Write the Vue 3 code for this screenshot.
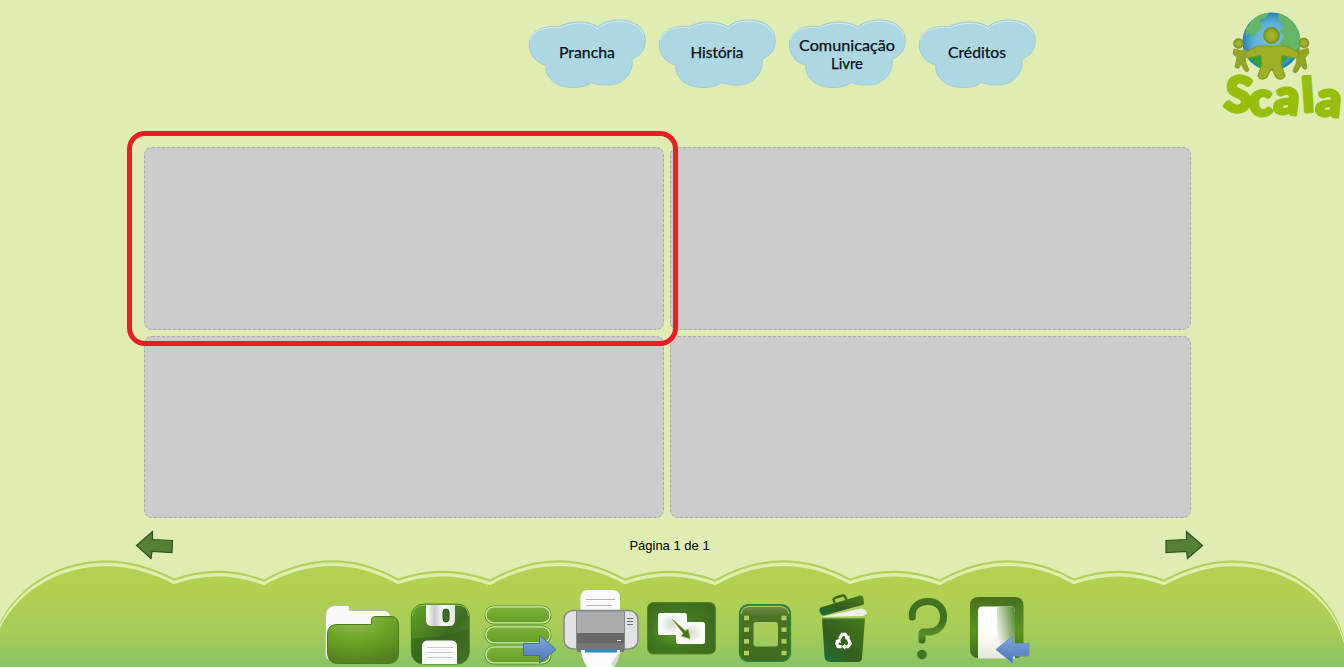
<script setup>
const menu = [
  { lines: [{ text: 'Prancha', y: 43, width: 56 }] },
  { lines: [{ text: 'História', y: 43, width: 53 }] },
  { lines: [{ text: 'Comunicação', y: 36, width: 96 }, { text: 'Livre', y: 54, width: 32 }] },
  { lines: [{ text: 'Créditos', y: 43, width: 58 }] },
]
const hills = 'M0 62 C20 22 62 0 107 0 C132 0 155 8 174 18 Q219 2 264 19 Q332 -19 398 18 Q444 2 490 19 Q557 -19 625 18 Q670 2 715 19 Q782 -19 850 18 Q895 2 940 19 Q1008 -19 1074 18 Q1119 2 1164 19 C1187 7 1209 0 1233 0 C1288 0 1334 34 1344 78 V120 H0Z'
</script>

<template>
  <main class="page">
    <header class="top">
      <nav class="menu">
        <svg v-for="(item, i) in menu" :key="i" width="130" height="80" viewBox="0 0 130 80">
          <path class="cloud" d="M34.500 11.800 C42 6.500 62 4 73 12 C78 7 86 5 94 5 C110 5 120.300 13 120.300 26 C120.300 35 115 41 107 44 C109 58 98 70 83 70 C77 70 71 69.500 66.500 67.500 C61 71.500 55 72.500 48 72.500 C31 72.500 20 63 20.700 50 C11 48 4.300 39 4.300 30 C4.300 17 17 9.500 34.500 11.800Z" />
          <path class="shine" d="M5.500 25 C8 15 20 11 35 13 C43 8 62 5.500 73 13.500 C79 8 86 6.200 94 6.200 C106 6.200 116 12 118.500 20" />
          <text v-for="line in item.lines" :key="line.text" x="62" :y="line.y" :textLength="line.width" lengthAdjust="spacingAndGlyphs">{{ line.text }}</text>
        </svg>
      </nav>
      <svg class="logo" width="134" height="122" viewBox="1210 3 134 122">
        <defs>
          <radialGradient id="sea"><stop offset="0" stop-color="#78c5e4" /><stop offset=".65" stop-color="#5eaed5" /><stop offset="1" stop-color="#2484b0" /></radialGradient>
          <radialGradient id="head"><stop offset="0" stop-color="#a9b92c" /><stop offset=".6" stop-color="#98aa24" /><stop offset="1" stop-color="#768b1f" /></radialGradient>
          <clipPath id="globe"><circle cx="1271.500" cy="41.500" r="29" /></clipPath>
        </defs>
        <circle cx="1271.500" cy="41.500" r="29" fill="url(#sea)" />
        <g clip-path="url(#globe)">
          <path d="M1246 29 L1255 16 L1270 12 L1265 18 L1259 21 L1263 26 L1258 31 L1254 37 L1249 33 L1246 37Z" fill="#65b767" />
          <path d="M1279 11 L1304 23 L1304 49 L1286 52 L1279 44 L1284 37 L1280 31 L1284 26 L1278 19Z" fill="#65b767" />
          <path d="M1245 50 L1257 51 L1265 61 L1262 70 L1248 60Z M1279 52 L1292 52 L1283 63Z" fill="#32a231" />
          <path d="M1242 34 Q1245 57 1265 71 H1240Z M1300 47 Q1292 59 1280 70 L1301 62Z" fill="#1686b7" opacity=".65" />
        </g>
        <g fill="url(#head)" stroke="#7c9020" stroke-width=".5">
          <circle cx="1238.500" cy="43.500" r="5" /><circle cx="1304" cy="43" r="5" /><circle cx="1271.500" cy="35.500" r="8.200" />
        </g>
        <path d="M1234 49 Q1240 51 1246 50 L1249 53 L1245 57 L1246 63 L1249 70 Q1248 73 1245 71 L1241 64 L1240 66 Q1239 70 1235 67 L1237 57 L1233 54Z M1308 48 Q1303 51 1296 50 L1293 54 L1297 57 L1296 64 L1293 70 Q1293 74 1297 72 L1301 65 L1303 68 Q1306 71 1307 68 L1305 58 L1309 53Z" fill="#93a522" stroke="#869a20" stroke-width=".8" />
        <path d="M1258 46 H1285 L1298 52 Q1300 58 1294 58 L1282 55 L1281 64 L1285 76 Q1281 82 1276 77 L1271.500 68 L1267 77 Q1261 82 1258 76 L1262 64 L1261 55 L1249 58 Q1243 57 1246 52Z" fill="#9fb027" stroke="#859a20" stroke-width="1.200" />
        <text class="brand"><tspan x="1223" y="110" rotate="7" font-size="49">S</tspan><tspan x="1250" y="116" rotate="-3" font-size="47">c</tspan><tspan x="1273" y="112.500" rotate="6" font-size="49">a</tspan><tspan x="1303" y="112" rotate="-4" font-size="47">l</tspan><tspan x="1315" y="114.500" rotate="6" font-size="49">a</tspan></text>
      </svg>
    </header>

    <section class="board">
      <div class="panel"><i class="selection"></i></div>
      <div class="panel"></div>
      <div class="panel"></div>
      <div class="panel"></div>
    </section>

    <div class="pager">
      <svg width="40" height="30" viewBox="0 0 40 30"><path d="M1.500 15.500 L17.500 1.500 V9.500 L37.500 10.500 L37 22.500 L17 21.500 L16 28.500Z" /></svg>
      <span>Página 1 de 1</span>
      <svg width="40" height="30" viewBox="0 0 40 30"><path d="M38.500 15.500 L22.500 1.500 V9.500 L2 10.500 V22.500 L22.500 21.500 L23.500 28.500Z" /></svg>
    </div>

    <footer class="footer">
      <svg class="hills" width="1344" height="107" viewBox="0 0 1344 107">
        <defs><linearGradient id="grass" x1="0" y1="-6" x2="0" y2="101" gradientUnits="userSpaceOnUse"><stop offset="0" stop-color="#b2d250" /><stop offset=".35" stop-color="#b0d051" /><stop offset=".7" stop-color="#a5cb58" /><stop offset="1" stop-color="#87c365" /></linearGradient></defs>
        <path :d="hills" transform="translate(0 .5)" fill="#b1d158" />
        <path :d="hills" transform="translate(0 2.800)" fill="#dfedaf" />
        <path :d="hills" transform="translate(0 6.200)" fill="url(#grass)" />
      </svg>
      <div class="tools">
        <svg width="85" height="80" viewBox="320 587 85 80">
          <defs>
            <radialGradient id="folder" cx=".38" cy="0" r="1"><stop offset="0" stop-color="#9dba62" /><stop offset=".5" stop-color="#6da626" /><stop offset="1" stop-color="#557f20" /></radialGradient>
            <linearGradient id="deep" x1="0" y1="0" x2="1" y2="1"><stop offset="0" stop-color="#66a525" /><stop offset=".55" stop-color="#3d6e20" /><stop offset="1" stop-color="#548927" /></linearGradient>
            <linearGradient id="metal"><stop offset="0" stop-color="#fff" /><stop offset=".3" stop-color="#c9ccc9" /><stop offset=".6" stop-color="#fff" /><stop offset="1" stop-color="#e2e4e2" /></linearGradient>
            <linearGradient id="blue" x1="0" y1="0" x2="0" y2="1"><stop offset="0" stop-color="#84a9dc" /><stop offset="1" stop-color="#4775b8" /></linearGradient>
          </defs>
          <path d="M325.500 655 V616 Q325.500 605.500 336 605.500 H349.500 V610.500 H384 Q391 611 391 620 V650 L331 660 Q326 660 325.500 655Z" fill="#f8f8f8" stroke="#b9bfae" />
          <path d="M327.500 634 Q327.500 624.500 337 624.500 H371.500 V620 Q371.500 616.500 376 616.500 H391 Q398.500 616.500 398.500 625 V653 Q398.500 663.500 388 663.500 H338 Q327.500 663.500 327.500 652Z" fill="url(#folder)" stroke="#477e1c" />
        </svg>
        <svg width="72" height="80" viewBox="405 587 72 80">
          <rect x="411.300" y="604" width="58" height="60" rx="12" fill="url(#deep)" stroke="#3f7a23" stroke-width=".8" />
          <path d="M412.500 616 Q412.500 605.200 424 605.200 H458 Q468 605.500 468.500 616" fill="none" stroke="#92bd57" />
          <path d="M412 638 Q440 639 469 629 V651 Q469 663 458 663 H423 Q412 663 412 651Z" fill="#315c20" opacity=".45" />
          <path d="M426 605 H455 V620 Q455 626 449 626 H432 Q426 626 426 620Z" fill="url(#metal)" /><rect x="443" y="609" width="6" height="13" rx="3" fill="#397122" stroke="#294f1d" />
          <path d="M422 664 V645 Q423 640.500 428 640.500 H452 Q457 641 457 646 V664Z" fill="#fafafa" /><path d="M427 647.500 H453 M427 652.500 H453 M427 657.500 H453" stroke="#c9ccc9" />
        </svg>
        <svg width="83" height="80" viewBox="477 587 83 80">
          <defs><linearGradient id="row" x1="0" y1="0" x2="0" y2="1"><stop offset="0" stop-color="#7fb03a" /><stop offset="1" stop-color="#64a023" /></linearGradient></defs>
          <g v-for="n in 3" :key="n" :transform="`translate(0 ${(n - 1) * 20})`"><rect x="484.500" y="605.500" width="67" height="19" rx="9.300" fill="#4d982d" /><rect x="485.900" y="606.900" width="64.200" height="16" rx="8" fill="url(#row)" stroke="#d7edb0" stroke-width="1.300" /></g>
          <path d="M523.500 643.500 H539.500 V635.500 L556 649.500 L539.500 663 V655.500 H523.500Z" fill="url(#blue)" stroke="#466fa8" />
        </svg>
        <svg width="83" height="80" viewBox="560 587 83 80">
          <rect x="580.500" y="590" width="39.500" height="28" rx="7" fill="#fafafa" /><path d="M586 599.500 H615 M586 605.500 H612" stroke="#b6b8b7" />
          <rect x="564" y="610.500" width="74" height="38.500" rx="9" fill="#e0e2e3" stroke="#85898b" stroke-width="1.500" />
          <path d="M576.500 611 H624.500 V650 H576.500Z" fill="#a9abad" stroke="#85878a" /><path d="M577 633 H624 V650 H577Z" fill="#66696c" /><path d="M577 643 H624 V652 H577Z" fill="#75777a" />
          <path d="M617 640.500 H621" stroke="#e2e2e2" /><path d="M627 618.500 H633 M627 621.500 H633 M627 624.500 H633" stroke="#67717a" />
          <path d="M581 650 H620 Q619 660 614 667 H587 Q582 660 581 650Z" fill="#fafafa" /><path d="M585 649.500 H617 V652.500 H585Z" fill="#288fc8" /><path d="M620 652 Q618 662 613 667 L611 664 Q614 658 620 652Z" fill="#d6d8d7" />
        </svg>
        <svg width="85" height="80" viewBox="643 587 85 80">
          <defs><radialGradient id="screen" cx=".4" cy=".55" r=".65"><stop offset="0" stop-color="#65a028" /><stop offset=".55" stop-color="#407621" /><stop offset="1" stop-color="#3f6d1e" /></radialGradient><radialGradient id="page"><stop offset="0" stop-color="#d6dece" /><stop offset="1" stop-color="#fff" /></radialGradient></defs>
          <rect x="647.500" y="602.500" width="68" height="51.500" rx="6" fill="url(#screen)" stroke="#568726" />
          <rect x="658" y="613" width="29" height="22" rx="2.500" fill="url(#page)" /><rect x="676" y="622" width="29" height="22" rx="2.500" fill="url(#page)" />
          <path d="M672.500 619.500 L685.500 631 L688 629 L690 638.500 L681.500 636 L683.500 633.500Z" fill="#47751d" stroke="#6d971f" stroke-width=".7" />
        </svg>
        <svg width="72" height="80" viewBox="728 587 72 80">
          <defs><linearGradient id="film" x1="0" y1="0" x2="0" y2="1"><stop offset="0" stop-color="#7b9148" /><stop offset=".22" stop-color="#4c7226" /><stop offset="1" stop-color="#416b1d" /></linearGradient></defs>
          <path fill-rule="evenodd" d="M749 604 H780 Q791 604 791 615 V651 Q791 662 780 662 H750 Q739 662 739 651 V615 Q739 604 749 604Z M756 622 Q753.500 622 753.500 625 V644 Q753.500 646.500 756 646.500 H775 Q778 646.500 778 644 V625 Q778 622 775 622Z" fill="url(#film)" />
          <rect x="739.700" y="604.700" width="50.600" height="56.600" rx="10" fill="none" stroke="#238638" stroke-width="1.600" /><path d="M741 614 Q742 606.500 750 606.500 H780 Q788 607 789 614" fill="none" stroke="#a5cf55" />
          <g fill="#a9cf60"><template v-for="n in 4" :key="n"><rect x="744" :y="604 + n * 11.700" width="5" height="4.500" /><rect x="781.500" :y="604 + n * 11.700" width="5" height="4.500" /></template></g>
        </svg>
        <svg width="80" height="80" viewBox="800 587 80 80">
          <defs><linearGradient id="bin" x1="0" y1="1" x2="1" y2="0"><stop offset="0" stop-color="#17743f" /><stop offset=".4" stop-color="#345d1d" /><stop offset="1" stop-color="#477c1e" /></linearGradient></defs>
          <path d="M834.500 603 L833.500 599.500 Q834 597.500 843 595.500 Q845 595 846.500 600" fill="none" stroke="#3f691e" stroke-width="2.400" />
          <path d="M821 617 L861 608.500 Q866 609 867 613.500 L863 616Z" fill="#eee" />
          <path d="M820.500 607.500 L860 595.500 Q863 595 863.500 598 L864 604.500 L823 615.800 Q819 613 819.500 609Z" fill="url(#bin)" />
          <path d="M822 618.500 H865 L862 658 Q862 662 857 662 H831 Q825 662 824.500 657Z" fill="url(#bin)" /><path d="M822.500 618.800 H865" stroke="#619139" />
          <g transform="translate(843 641) scale(.87) translate(-842.500 -642)">
            <g fill="none" stroke="#fff" stroke-width="3.700"><path d="M838.300 639.500 L841.500 634.500 H845 L848 639" /><path d="M848.800 640.500 L850.800 645 L848 648.500 H844" /><path d="M841 648.500 H837 L835.200 645 L837 641.500" /></g>
            <path d="M850 635.500 L850 642 L844.500 639.500Z M845 645 V652 L841 648.500Z M833.500 641 L839.500 639.500 L840 645Z" fill="#fff" />
          </g>
        </svg>
        <svg width="80" height="80" viewBox="880 587 80 80">
          <defs><linearGradient id="question" x1="0" y1="598" x2="0" y2="642" gradientUnits="userSpaceOnUse"><stop offset="0" stop-color="#427223" /><stop offset=".5" stop-color="#426e20" /><stop offset=".85" stop-color="#589026" /><stop offset="1" stop-color="#3b6d20" /></linearGradient></defs>
          <path d="M912.300 617 C911 607 919 601.500 928 601.500 C937.500 601.500 943.500 608 943.500 616.500 C943.500 627 936 632 929 632 H924 Q922 632 922 634 V640" fill="none" stroke="url(#question)" stroke-width="7" stroke-linecap="round" stroke-linejoin="round" /><circle cx="922" cy="654.500" r="4.800" fill="#3f7623" />
        </svg>
        <svg width="75" height="80" viewBox="960 587 75 80">
          <defs><linearGradient id="frame" x1="0" y1="0" x2="0" y2="1"><stop offset="0" stop-color="#45701e" /><stop offset=".55" stop-color="#5b9523" /><stop offset="1" stop-color="#416b20" /></linearGradient><linearGradient id="opening" x1="0" y1=".7" x2="1" y2=".3"><stop offset="0" stop-color="#f2f5ee" /><stop offset="1" stop-color="#5f8f38" /></linearGradient><linearGradient id="door" x1="0" y1="0" x2="0" y2="1"><stop offset=".5" stop-color="#fff" /><stop offset="1" stop-color="#e4e7d9" /></linearGradient></defs>
          <rect x="970" y="597" width="53.500" height="61" rx="8" fill="url(#frame)" />
          <path d="M978 658.500 V611 Q978 606.500 982 606.500 H1010 Q1015 606.500 1015 612 V658.500Z" fill="url(#door)" /><path d="M997 606.500 H1010 Q1015 606.500 1015 612 V646 H1003 Q997 646 997 641Z" fill="url(#opening)" />
          <path d="M996 649.500 L1012.500 636.500 V643.500 H1029 V656 H1012.500 V663Z" fill="url(#blue)" stroke="#6a90c8" />
        </svg>
      </div>
    </footer>
  </main>
</template>

<style>
body { overflow: hidden; }
</style>

<style scoped>
.page { width: 1344px; height: 667px; overflow: hidden; background: #dfedb3; display: flex; flex-direction: column; font-family: "Liberation Sans", Arial, sans-serif; }
svg { display: block; flex: none; }
.top { height: 147px; display: flex; justify-content: space-between; padding: 3px 0 0 525px; box-sizing: border-box; flex: none; }
.menu { display: flex; padding-top: 12px; }
.menu text { font: 400 16px Lato, sans-serif; text-anchor: middle; fill: #071014; stroke: #071014; stroke-width: .25px; }
.cloud { fill: #aed7e4; stroke: #a1cbd5; stroke-width: 1; }
.shine { fill: none; stroke: #d4ebed; stroke-width: 1; }
.brand { font-family: Lato, sans-serif; font-weight: 900; fill: #96bf0d; stroke: #96bf0d; stroke-width: 3.4px; stroke-linejoin: round; }
.board { display: grid; grid-template-columns: 520px 521px; grid-template-rows: 183px 182px; gap: 6px; padding-left: 144px; flex: none; }
.panel { position: relative; background: #ccc; border: 1px dashed #aaa; border-radius: 8px; }
.selection { position: absolute; z-index: 2; left: -18px; top: -17px; width: 541px; height: 205px; border: 5px solid #ed1c24; border-radius: 18px; }
.pager { display: flex; justify-content: space-between; align-items: center; height: 30px; padding: 12px 140px 0 135px; flex: none; }
.pager path { fill: #568034; stroke: #2f541f; stroke-width: 1.2; }
.pager span { font-size: 13px; color: #000; }
.footer { height: 107px; display: grid; flex: none; }
.hills, .tools { grid-area: 1 / 1; }
.tools { display: flex; align-self: end; padding-left: 320px; }
</style>
